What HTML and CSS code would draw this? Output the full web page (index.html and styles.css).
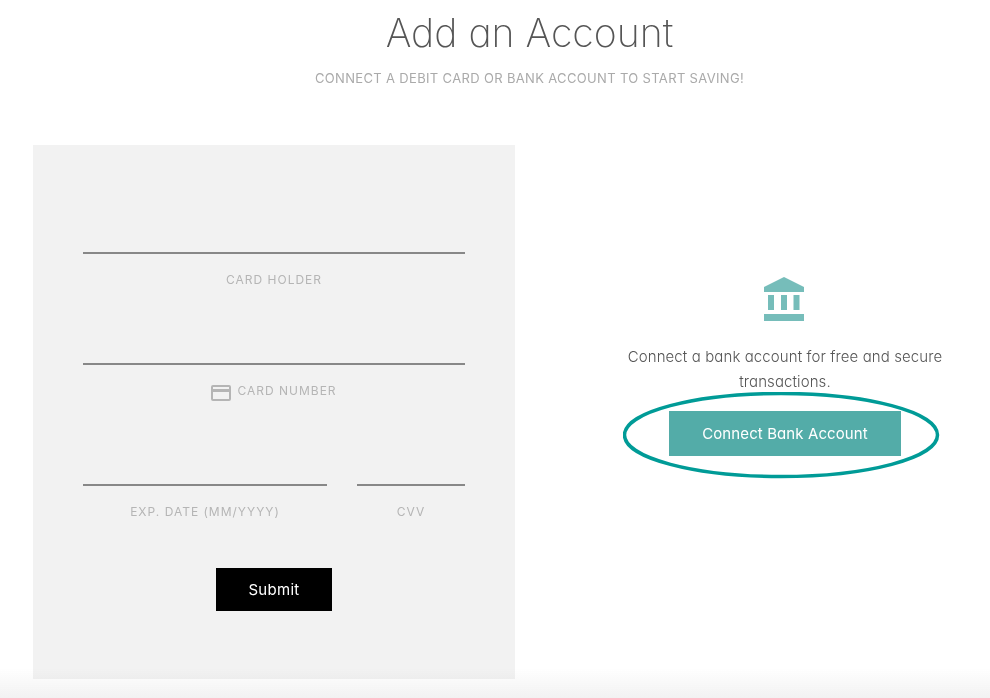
FILE: index.html
```html
<!DOCTYPE html>
<html>
<head>
  <title>Add an Account</title>
  <meta charset="UTF-8">
  <link rel="stylesheet" href="styles.css">
</head>
<body>
  <header class="page-header">
    <h1>Add an Account</h1>
    <p>CONNECT A DEBIT CARD OR BANK ACCOUNT TO START SAVING!</p>
  </header>
  <main class="page-main">
    <form class="card-form">
      <div class="field">
        <input type="text" id="card-holder">
        <label for="card-holder">CARD HOLDER</label>
      </div>
      <div class="field">
        <input type="text" id="card-number">
        <label for="card-number">
          <svg class="card-icon" width="20" height="16" viewBox="0 0 20 16">
            <path fill="#b5b5b5" fill-rule="evenodd" d="M2 0h16a2 2 0 0 1 2 2v12a2 2 0 0 1-2 2H2a2 2 0 0 1-2-2V2a2 2 0 0 1 2-2zm0 2v2h16V2H2zm0 5v7h16V7H2z"/>
          </svg>
          CARD NUMBER
        </label>
      </div>
      <div class="field-row">
        <div class="field field-date">
          <input type="text" id="exp-date">
          <label for="exp-date">EXP. DATE (MM/YYYY)</label>
        </div>
        <div class="field field-cvv">
          <input type="text" id="cvv">
          <label for="cvv">CVV</label>
        </div>
      </div>
      <button type="button" class="submit-button">Submit</button>
    </form>
    <section class="bank-panel">
      <svg class="bank-icon" width="40" height="44" viewBox="0 0 40 44">
        <path fill="#76bdba" d="M20 0l20 10v5H0v-5z"/>
        <path fill="#76bdba" d="M4 18h6v15H4zM17 18h6v15h-6zM29.5 18h6v15h-6zM0 37h40v7H0z"/>
      </svg>
      <p>Connect a bank account for free and secure transactions.</p>
      <div class="bank-action">
        <button type="button" class="bank-button">Connect Bank Account</button>
        <svg class="bank-oval" width="317" height="87" viewBox="0 0 317 87">
          <ellipse cx="158" cy="43" rx="156.5" ry="41.5" fill="none" stroke="#009b97" stroke-width="3.5"/>
        </svg>
      </div>
    </section>
  </main>
  <div class="bottom-fade"></div>
</body>
</html>
```

FILE: styles.css
```css
html, body {
  height: 100%;
}

body {
  margin: 0;
  overflow: hidden;
  font-family: Inter, "Liberation Sans", sans-serif;
  font-feature-settings: "cv11";
  background-color: #fff;
}

.page-header {
  padding-left: 69px;
  text-align: center;
}

.page-header h1 {
  margin: 0;
  padding-top: 10px;
  font-size: 39.2px;
  line-height: 46px;
  font-weight: 200;
  color: #555;
}

.page-header p {
  margin: 13px 0 0;
  font-size: 13px;
  line-height: 18px;
  letter-spacing: 0.34px;
  color: #aaa;
}

.page-main {
  display: flex;
  margin-top: 58px;
  padding-left: 33px;
}

.card-form {
  box-sizing: border-box;
  width: 482px;
  height: 534px;
  padding: 69px 50px 0;
  background-color: #f2f2f2;
}

.field {
  margin-bottom: 36px;
}

.field input {
  display: block;
  box-sizing: border-box;
  width: 100%;
  height: 40px;
  border: none;
  border-bottom: 2px solid #888;
  background: none;
}

.field label {
  display: flex;
  justify-content: center;
  align-items: center;
  gap: 6px;
  height: 20px;
  margin-top: 15px;
  font-size: 12px;
  letter-spacing: 1px;
  color: #b5b5b5;
}

.field-row {
  display: flex;
  gap: 30px;
  margin: 46px 0 47px;
}

.field-row .field {
  margin-bottom: 0;
}

.field-date {
  width: 244px;
}

.field-cvv {
  width: 108px;
}

.card-icon {
  margin-top: 6px;
}

.submit-button {
  display: block;
  width: 116px;
  height: 43px;
  margin: 0 auto;
  border: none;
  background-color: #000;
  color: #fff;
  font-family: inherit;
  font-feature-settings: inherit;
  font-size: 15px;
  letter-spacing: 0.3px;
}

.bank-panel {
  display: flex;
  flex-direction: column;
  align-items: center;
  box-sizing: border-box;
  width: 410px;
  margin-left: 65px;
  padding: 132px 40px 0;
  text-align: center;
}

.bank-icon {
  margin-right: 2px;
}

.bank-panel p {
  margin: 23px 0 0;
  font-size: 15px;
  line-height: 25px;
  font-weight: 300;
  letter-spacing: 0.1px;
  color: #555;
}

.bank-action {
  position: relative;
  margin-top: 17px;
}

.bank-button {
  display: block;
  width: 232px;
  height: 45px;
  border: none;
  background-color: #53aca8;
  color: #fff;
  font-family: inherit;
  font-feature-settings: inherit;
  font-size: 15px;
  letter-spacing: 0.1px;
}

.bank-oval {
  position: absolute;
  left: -46px;
  top: -19px;
}

.bottom-fade {
  position: absolute;
  left: 0;
  right: 0;
  bottom: 0;
  height: 30px;
  background: linear-gradient(rgba(242, 242, 242, 0), rgba(242, 242, 242, 1));
  mix-blend-mode: multiply;
  pointer-events: none;
}
```
